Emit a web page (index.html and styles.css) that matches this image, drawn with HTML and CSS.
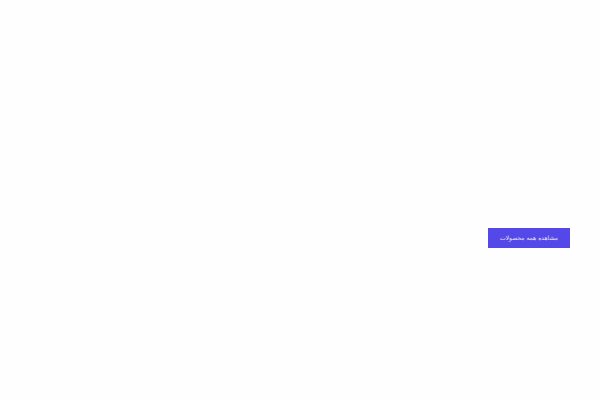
FILE: index.html
```
<!DOCTYPE html>
<html lang="fa" dir="rtl">
<head>
    <meta charset="UTF-8">
    <meta name="viewport" content="width=device-width, initial-scale=1.0">
    <title>محصولات</title>
    <link rel="stylesheet" href="styles.css">
</head>
<body>
    <section class="hero">
        <a href="#" class="btn">مشاهده همه محصولات</a>
    </section>
</body>
</html>
```

FILE: styles.css
```
* {
    box-sizing: border-box;
}
body {
    margin: 0;
    font-family: "DejaVu Sans", sans-serif;
    background: #fefefe;
}
.hero {
    display: flex;
    align-items: center;
    min-height: 100vh;
    padding: 76px 30px 0;
}
.btn {
    padding: 2px 12px;
    font-size: 6px;
    line-height: 16px;
    color: #e6e3fc;
    background: #5548e8;
    text-decoration: none;
}
```
